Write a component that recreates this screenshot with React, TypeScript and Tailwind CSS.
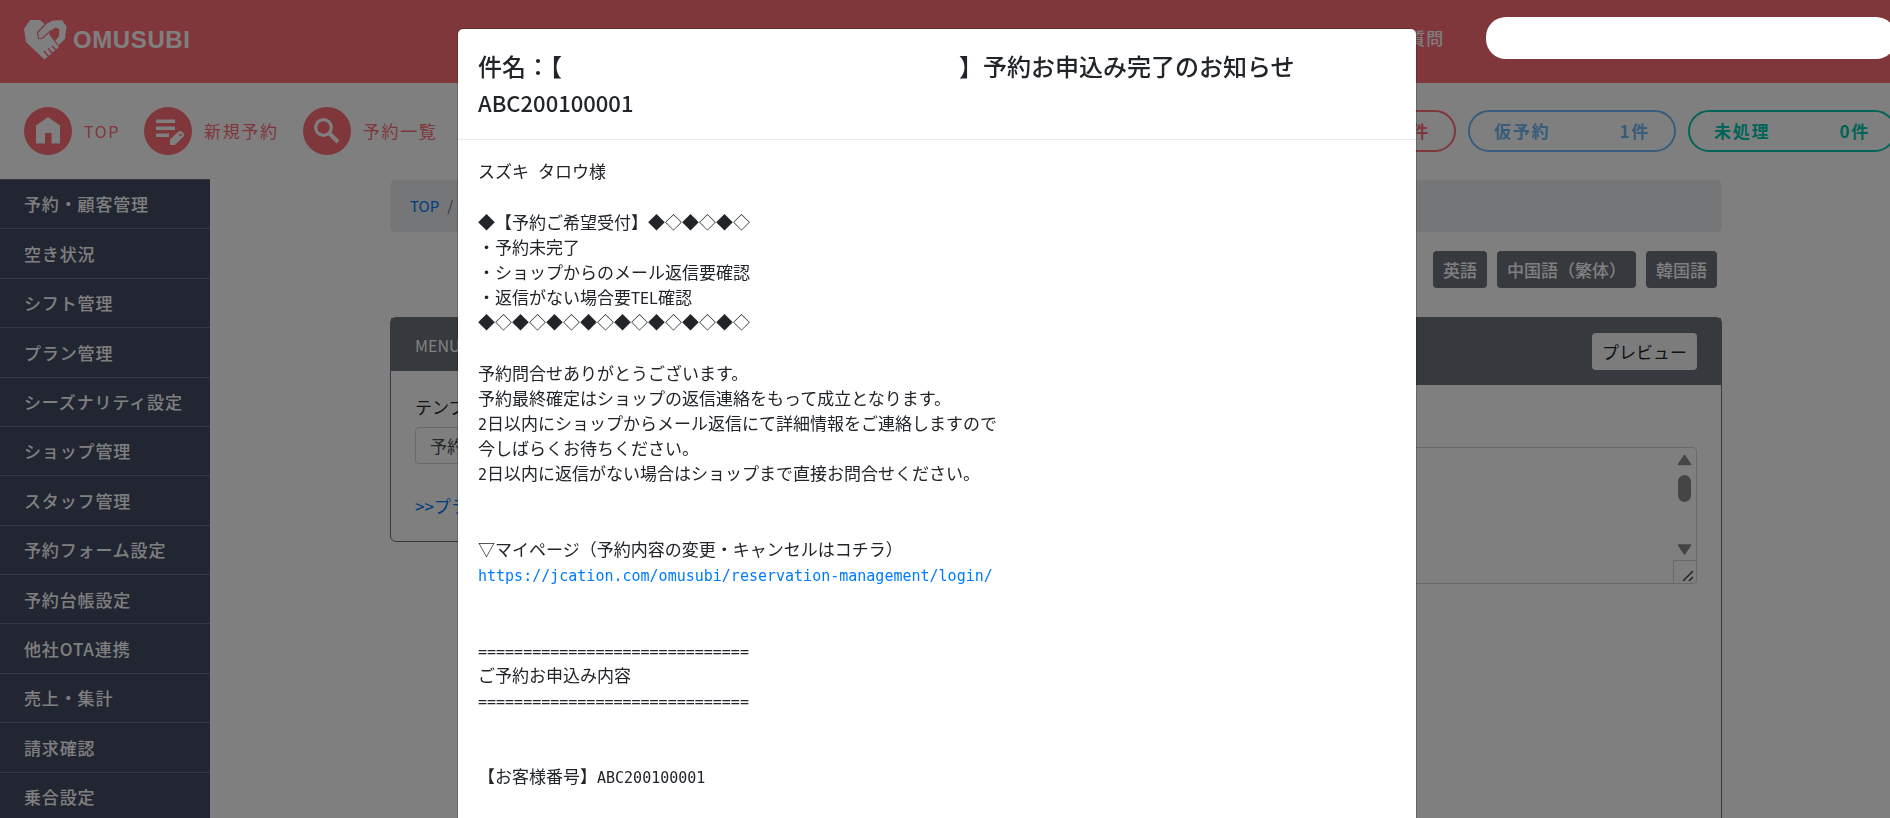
import React from 'react';

const sideMenu = [
  '予約・顧客管理',
  '空き状況',
  'シフト管理',
  'プラン管理',
  'シーズナリティ設定',
  'ショップ管理',
  'スタッフ管理',
  '予約フォーム設定',
  '予約台帳設定',
  '他社OTA連携',
  '売上・集計',
  '請求確認',
  '乗合設定',
];

const languages = ['英語', '中国語（繁体）', '韓国語'];

// Mail body, one entry per paragraph. `wide` paragraphs are followed by two blank lines.
const mailBlocks: { lines: string[]; wide?: boolean }[] = [
  { lines: ['スズキ タロウ様'] },
  {
    lines: [
      '◆【予約ご希望受付】◆◇◆◇◆◇',
      '・予約未完了',
      '・ショップからのメール返信要確認',
      '・返信がない場合要TEL確認',
      '◆◇◆◇◆◇◆◇◆◇◆◇◆◇◆◇',
    ],
  },
  {
    lines: [
      '予約問合せありがとうございます。',
      '予約最終確定はショップの返信連絡をもって成立となります。',
      '2日以内にショップからメール返信にて詳細情報をご連絡しますので',
      '今しばらくお待ちください。',
      '2日以内に返信がない場合はショップまで直接お問合せください。',
    ],
    wide: true,
  },
  {
    lines: [
      '▽マイページ（予約内容の変更・キャンセルはコチラ）',
      'https://jcation.com/omusubi/reservation-management/login/',
    ],
    wide: true,
  },
  {
    lines: ['==============================', 'ご予約お申込み内容', '=============================='],
    wide: true,
  },
  { lines: ['【お客様番号】ABC200100001'] },
];

const Logo = () => (
  <a href="#" className="mb-1 flex items-center gap-[6px] text-white">
    <svg width="43" height="40" viewBox="0 0 43 40" fill="currentColor" aria-hidden="true">
      <path d="M0 9 L6 0 H16 L21 4.500 L29 0.500 L38 0.200 L42.500 6.500 L41 19 L34 25.500 L35 27 L20.500 39.500 L2 22 Z" />
      <path d="M26.500 11 L31.500 7.500 L35.500 9.500 L34.800 16.500 L31.500 20.500 L25.500 14.500 Z" fill="#ff6e79" />
      <path d="M21.500 4 L13.500 12.500 L14.500 18.500 L18 18.500 L27 10.500 M25.500 14 L34.500 26" fill="none" stroke="#ff6e79" strokeWidth="1.200" />
      <path d="M20 31 L25 37 M24 28.500 L29 34 M28 26 L33 31" fill="none" stroke="#ff6e79" strokeWidth="1.500" />
    </svg>
    <span className="font-['Liberation_Sans',sans-serif] text-2xl font-bold tracking-wide">OMUSUBI</span>
  </a>
);

const HomeIcon = () => (
  <svg width="48" height="48" viewBox="0 0 48 48" aria-hidden="true">
    <circle cx="24" cy="24" r="24" fill="#ff6e79" />
    <path d="M24 10 L36 18.500 V36.500 H27.500 V26 H21 V36.500 H12 V18.500 Z" fill="#fff" />
  </svg>
);

const EditIcon = () => (
  <svg width="48" height="48" viewBox="0 0 48 48" aria-hidden="true">
    <circle cx="24" cy="24" r="24" fill="#ff6e79" />
    <path d="M12 12.500h19v3.500h-19z M12 19.500h19v3.500h-19z M12 26.500h13v3.500h-13z" fill="#fff" />
    <path d="M26 32.500 L34.500 24.500 Q37 23 39 25.500 Q41 28 39 30 L31 38 H26 Z" fill="#fff" />
    <circle cx="36.500" cy="28" r="1.200" fill="#ff6e79" />
  </svg>
);

const SearchIcon = () => (
  <svg width="48" height="48" viewBox="0 0 48 48" aria-hidden="true">
    <circle cx="24" cy="24" r="24" fill="#ff6e79" />
    <circle cx="20.500" cy="20.500" r="7.800" fill="none" stroke="#fff" strokeWidth="3.200" />
    <path d="M26 26 L35 35" stroke="#fff" strokeWidth="4" />
  </svg>
);

const navItems = [
  { label: 'TOP', Icon: HomeIcon, size: 'text-base' },
  { label: '新規予約', Icon: EditIcon, size: 'text-[17px]' },
  { label: '予約一覧', Icon: SearchIcon, size: 'text-[17px]' },
];

const counters = [
  { label: '新規', count: '0件', color: 'border-[#ff6e79] text-[#ff6e79]' },
  { label: '仮予約', count: '1件', color: 'border-[#70b8f8] text-[#70b8f8]' },
  { label: '未処理', count: '0件', color: 'border-[#00c8b0] text-[#00c8b0]' },
];

const Scrollbar = () => (
  <svg className="absolute top-px right-px" width="23" height="135" viewBox="0 0 23 135" aria-hidden="true">
    <path d="M11.500 7.500 L17.500 16.500 H5.500 Z M11.500 106 L17.500 97 H5.500 Z" fill="#8b8b8b" stroke="#8b8b8b" strokeWidth="1.500" strokeLinejoin="round" />
    <rect x="5" y="27" width="13" height="27" rx="6.500" fill="#8b8b8b" />
    <path d="M0.500 135 V112.500 H23" fill="none" stroke="#d0d0d0" />
    <path d="M10 133 L20 123 M16 133 L20 129" stroke="#444" strokeWidth="1.500" />
  </svg>
);

const MailLine = ({ text }: { text: string }) => {
  if (text.startsWith('https://')) {
    return (
      <div className="h-[25px]">
        <a href={text} className="font-['DejaVu_Sans_Mono',monospace] text-[15px] text-[#007bff]">{text}</a>
      </div>
    );
  }
  // Half-width runs are set in the monospaced face
  const parts = text.split(/([\x20-\x7e]+)/);
  return (
    <div className="h-[25px]">
      {parts.map((part, i) =>
        i % 2 === 1 ? (
          <span key={i} className="font-['DejaVu_Sans_Mono',monospace] text-[15px]">{part}</span>
        ) : (
          part
        )
      )}
    </div>
  );
};

const MailModal = () => (
  <div className="fixed inset-0 z-20 flex items-start justify-center overflow-hidden pt-7 pr-8 pl-4">
    <div role="dialog" aria-modal="true" aria-labelledby="mail-title" className="min-h-screen w-full max-w-[960px] rounded-md border border-black/20 bg-white bg-clip-padding text-[#212529]">
      <div className="border-b border-[#e9ecef] px-5 py-[18px]">
        <h5 id="mail-title" className="text-2xl leading-[37px] font-medium">
          件名：【<span className="inline-block w-[397px]" />】予約お申込み完了のお知らせ
          <span className="block text-[22px]">ABC200100001</span>
        </h5>
      </div>
      <div className="px-5 pt-[18px] text-[17px] leading-[25px]">
        {mailBlocks.map((block, i) => (
          <div key={i} className={block.wide ? 'mb-[51px] whitespace-pre' : 'mb-[26px] whitespace-pre'}>
            {block.lines.map((line, j) => (
              <MailLine key={j} text={line} />
            ))}
          </div>
        ))}
      </div>
    </div>
  </div>
);

const App: React.FC = () => {
  return (
    <div className="h-screen overflow-hidden bg-white font-['Noto_Sans_CJK_JP',sans-serif] text-[17px] text-[#212529]">
      <header className="flex h-[83px] items-center justify-between bg-[#ff6e79] pl-6">
        <Logo />
        <div className="-mr-1.5 mb-2 flex items-center gap-[42px]">
          <a href="#" className="font-medium tracking-wider text-white">質問</a>
          <div className="relative z-30 h-[42px] w-[410px] rounded-[20px] bg-white" />
        </div>
      </header>

      <nav className="flex h-24 items-center justify-between pl-6">
        <ul className="flex items-center gap-6">
          {navItems.map(({ label, Icon, size }) => (
            <li key={label}>
              <a href="#" className={`flex items-center gap-3 tracking-widest text-[#ff6e79] ${size}`}>
                <Icon />
                {label}
              </a>
            </li>
          ))}
        </ul>
        <ul className="-mr-1.5 flex gap-3">
          {counters.map(({ label, count, color }) => (
            <li key={label}>
              <a href="#" className={`flex h-[42px] w-[208px] items-center justify-between rounded-full border-2 px-6 font-bold tracking-widest ${color}`}>
                <span>{label}</span>
                <span>{count}</span>
              </a>
            </li>
          ))}
        </ul>
      </nav>

      <div className="flex items-start">
        <aside className="w-[210px] shrink-0 bg-[#424c64]">
          <ul className="grid h-[642px] auto-rows-fr">
            {sideMenu.map((item) => (
              <li key={item} className="border-t border-[#6a7080]">
                <a href="#" className="flex h-full items-center pl-6 font-medium tracking-wider text-white">{item}</a>
              </li>
            ))}
          </ul>
        </aside>

        <main className="flex-1 pr-[168px] pl-[180px]">
          <ol className="mt-px flex h-[52px] items-center gap-2 rounded-md bg-[#e9ecef] px-5 text-[15px]">
            <li><a href="#" className="text-[#007bff]">TOP</a></li>
            <li className="text-[#6c757d]">/</li>
          </ol>

          <div className="mt-[19px] flex justify-end gap-[10px] pr-[5px]">
            {languages.map((lang) => (
              <button key={lang} type="button" className="h-[37px] rounded-[4px] bg-[#6c757d] px-[10px] font-medium text-white">{lang}</button>
            ))}
          </div>

          <div className="mt-[29px] grid grid-cols-3 items-start gap-6">
            <section className="h-[225px] rounded-md border border-[#6c757d]">
              <h2 className="flex h-[53px] items-center bg-[#6c757d] px-6 text-base text-white">MENU</h2>
              <div className="px-6 pt-6">
                <label htmlFor="template" className="block leading-6">テンプ</label>
                <select id="template" className="mt-2 h-[37px] w-full appearance-none rounded-[4px] border border-[#ced4da] px-3.5 text-[#495057]">
                  <option>予約</option>
                </select>
                <a href="#" className="mt-[30px] block leading-6 text-[#007bff]">&gt;&gt;プラ</a>
              </div>
            </section>

            <section className="col-span-2 h-[640px] rounded-md border border-[#6c757d]">
              <div className="flex h-[67px] items-center justify-end bg-[#6c757d] px-6">
                <button type="button" className="h-[37px] rounded-[4px] bg-[#f8f9fa] px-[10px] text-[#212529]">プレビュー</button>
              </div>
              <div className="px-6 pt-[62px]">
                <div className="relative">
                  <textarea aria-label="本文" className="block h-[137px] w-full resize-none rounded-[4px] border border-[#ced4da]" />
                  <Scrollbar />
                </div>
              </div>
            </section>
          </div>
        </main>
      </div>

      <div className="fixed inset-0 z-10 bg-black/50" />
      <MailModal />
    </div>
  );
};

export default App;
